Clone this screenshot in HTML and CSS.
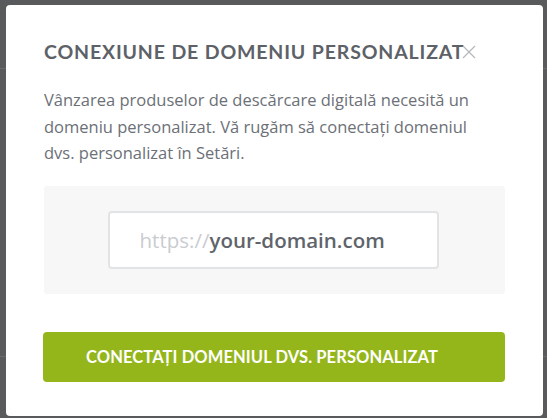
FILE: index.html
```html
<!DOCTYPE html>
<html lang="ro">
<head>
<meta charset="utf-8">
<link rel="stylesheet" href="styles.css">
</head>
<body>
<div class="backdrop">
  <div class="bg-line bg-line-top"></div>
  <div class="bg-line bg-line-bottom"></div>
  <div class="modal">
    <div class="modal-head">
      <h2 class="title">CONEXIUNE DE DOMENIU PERSONALIZAT</h2>
      <button class="close" aria-label="Închide">
        <svg width="14" height="14" viewBox="0 0 14 14"><path d="M1 1 L13 13 M13 1 L1 13" stroke="#b4b7bb" stroke-width="1.2" fill="none"/></svg>
      </button>
    </div>
    <p class="desc">Vânzarea produselor de descărcare digitală necesită un domeniu personalizat. Vă rugăm să conectaţi domeniul dvs. personalizat în Setări.</p>
    <div class="preview">
      <div class="url-box"><span class="proto">https://</span><span class="domain">your-domain.com</span></div>
    </div>
    <button class="cta">CONECTAȚI DOMENIUL DVS. PERSONALIZAT</button>
  </div>
</div>
</body>
</html>
```

FILE: styles.css
```css
html, body {
  margin: 0;
  padding: 0;
  height: 100%;
}
body {
  background: #595a5b;
  font-family: "Open Sans", sans-serif;
}
.backdrop {
  position: relative;
  height: 418px;
  padding: 5px 4px 2px 6px;
  box-sizing: border-box;
}
.bg-line {
  position: absolute;
  left: 0;
  right: 0;
  height: 1px;
  background: #6a6b6c;
}
.bg-line-top { top: 68px; }
.bg-line-bottom { top: 356px; }
.modal {
  position: relative;
  background: #fff;
  border-radius: 4px;
  height: 411px;
  padding: 0 37px 0 38px;
  box-sizing: border-box;
}
.modal-head {
  display: flex;
  align-items: flex-start;
  padding-top: 35px;
}
.title {
  margin: 0;
  font-family: "Lato", sans-serif;
  font-weight: 700;
  font-size: 19.5px;
  line-height: 24px;
  color: #5d6168;
  letter-spacing: 0.85px;
  white-space: nowrap;
}
.close {
  border: 0;
  background: none;
  padding: 0;
  margin: 5px 0 0 -2px;
  width: 14px;
  height: 14px;
  cursor: pointer;
  display: block;
}
.close svg { display: block; }
.desc {
  margin: 23px 0 0;
  font-size: 16.5px;
  line-height: 26.5px;
  color: #6c7077;
  width: 445px;
}
.preview {
  margin-top: 19px;
  width: 461px;
  height: 108px;
  background: #f7f7f7;
  border-radius: 3px;
  display: flex;
  align-items: center;
  justify-content: center;
}
.url-box {
  width: 331px;
  height: 58px;
  box-sizing: border-box;
  border: 2px solid #e2e3e4;
  border-radius: 4px;
  background: #fff;
  display: flex;
  align-items: center;
  padding-left: 30px;
  font-size: 20.5px;
  margin-left: -3px;
}
.proto { color: #c9ccd0; }
.domain { color: #5f646b; font-weight: 600; }
.cta {
  display: block;
  margin-top: 38px;
  width: 462px;
  height: 50px;
  margin-left: -1px;
  padding: 0 24px 0 0;
  border: 0;
  border-radius: 4px;
  background: #94b61b;
  color: #fff;
  font-family: "Lato", sans-serif;
  font-weight: 700;
  font-size: 16.5px;
  letter-spacing: 0.1px;
  cursor: pointer;
}
```
